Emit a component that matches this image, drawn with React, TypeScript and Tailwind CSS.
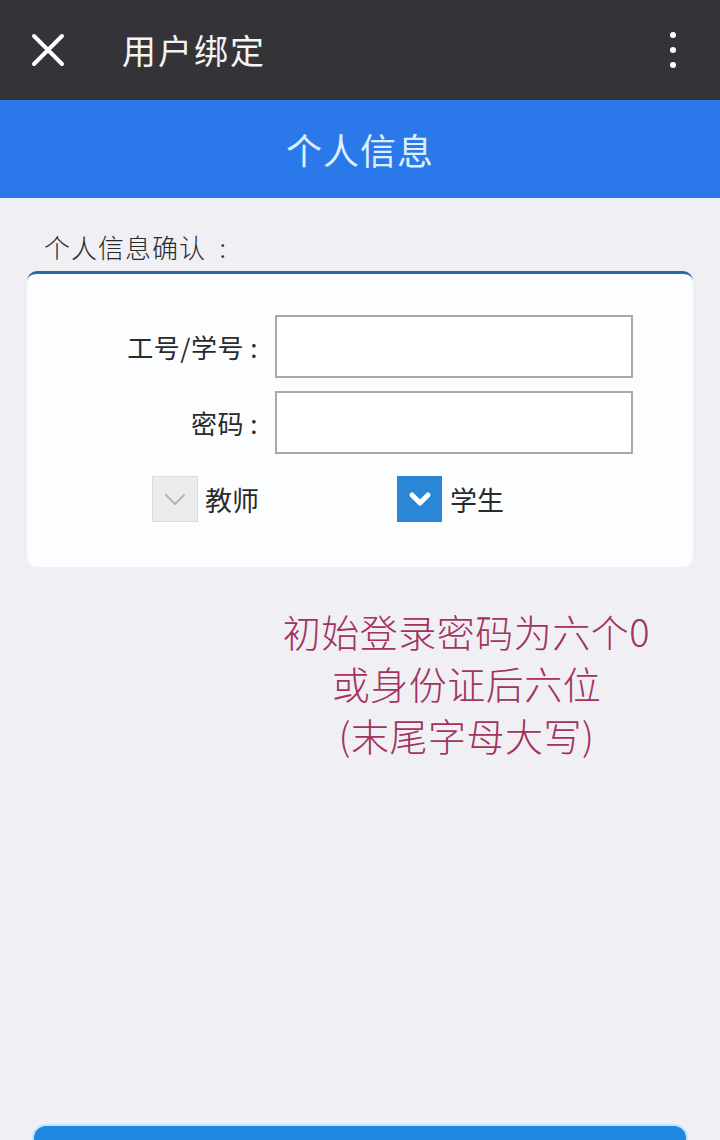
import React, { useState } from 'react';

const font = { fontFamily: '"Noto Sans CJK SC", "Noto Sans", sans-serif' };

const App: React.FC = () => {
    const [role, setRole] = useState<'teacher' | 'student'>('student');

    return (
        <div className="w-[720px] h-[1140px] overflow-hidden bg-[#efeff4] flex flex-col" style={font}>
            {/* Top bar */}
            <div className="h-[100px] bg-[#343438] flex items-center px-[30px] shrink-0">
                <svg width="36" height="36" viewBox="0 0 36 36" className="shrink-0">
                    <path d="M4 4 L32 32 M32 4 L4 32" stroke="#ffffff" strokeWidth="4" strokeLinecap="round" />
                </svg>
                <h1 className="ml-[56px] text-[34px] text-[#f4f4f4] leading-none tracking-[2px]">用户绑定</h1>
                <div className="ml-auto mr-[14px] flex flex-col gap-[9px] items-center">
                    <span className="w-[6px] h-[6px] rounded-full bg-white"></span>
                    <span className="w-[6px] h-[6px] rounded-full bg-white"></span>
                    <span className="w-[6px] h-[6px] rounded-full bg-white"></span>
                </div>
            </div>

            {/* Section header */}
            <div className="h-[98px] bg-[#2a78ea] flex items-center justify-center shrink-0">
                <h2 className="text-[36px] text-[#dcefff] leading-none tracking-[1px]">个人信息</h2>
            </div>

            {/* Content */}
            <div className="flex-1 flex flex-col px-[27px] pt-[36px]">
                <p className="text-[26px] text-[#2a2a2a] leading-none pl-[17px] tracking-[1px] font-light">个人信息确认 &nbsp;:</p>

                <div className="mt-[11px] w-[666px] h-[296px] bg-[#fcfdff] rounded-[10px] border-t-[3px] border-t-[#2b66a6] flex flex-col pt-[41px]">
                    <div className="flex items-center h-[63px]">
                        <label className="w-[248px] text-right text-[26px] text-[#2a2a2a] pr-[17px] tracking-[0.5px]">工号/学号 :</label>
                        <input className="w-[358px] h-[63px] border-2 border-[#a9a9a9] bg-white outline-none" />
                    </div>
                    <div className="flex items-center h-[63px] mt-[13px]">
                        <label className="w-[248px] text-right text-[26px] text-[#2a2a2a] pr-[17px] tracking-[0.5px]">密码 :</label>
                        <input type="password" className="w-[358px] h-[63px] border-2 border-[#a9a9a9] bg-white outline-none" />
                    </div>
                    <div className="flex items-center mt-[22px]">
                        <button onClick={() => setRole('teacher')} className="ml-[125px] flex items-center">
                            <span className={`w-[46px] h-[46px] flex items-center justify-center border ${role === 'teacher' ? 'bg-[#2b86d6] border-[#2b86d6]' : 'bg-[#ececec] border-[#dcdcdc]'}`}>
                                <svg width="24" height="16" viewBox="0 0 24 16">
                                    <path d="M3 4 L12 13 L21 4" fill="none" stroke={role === 'teacher' ? '#ffffff' : '#b4b4b4'} strokeWidth={role === 'teacher' ? 5 : 2} strokeLinecap="round" strokeLinejoin="round" />
                                </svg>
                            </span>
                            <span className="ml-[7px] text-[27px] text-[#2a2a2a] leading-none">教师</span>
                        </button>
                        <button onClick={() => setRole('student')} className="ml-[138px] flex items-center">
                            <span className={`w-[45px] h-[46px] flex items-center justify-center border ${role === 'student' ? 'bg-[#2b86d6] border-[#2b86d6]' : 'bg-[#ececec] border-[#dcdcdc]'}`}>
                                <svg width="24" height="16" viewBox="0 0 24 16">
                                    <path d="M4 4 L12 12 L20 4" fill="none" stroke={role === 'student' ? '#ffffff' : '#b4b4b4'} strokeWidth={role === 'student' ? 5 : 2} strokeLinecap="round" strokeLinejoin="round" />
                                </svg>
                            </span>
                            <span className="ml-[8px] text-[27px] text-[#2a2a2a] leading-none">学生</span>
                        </button>
                    </div>
                </div>

                {/* Hint */}
                <div className="mt-[38px] pl-[213px] flex flex-col items-center text-[38px] leading-[52px] text-[#a2325e] font-light tracking-[0.5px]">
                    <p>初始登录密码为六个0</p>
                    <p>或身份证后六位</p>
                    <p>(末尾字母大写)</p>
                </div>

                {/* Bottom button */}
                <div className="mt-auto mx-[5px] h-[16px] bg-[#1e88e0] rounded-t-[14px] border-t-2 border-x-2 border-[#bfe6ff]"></div>
            </div>
        </div>
    );
};

export default App;
